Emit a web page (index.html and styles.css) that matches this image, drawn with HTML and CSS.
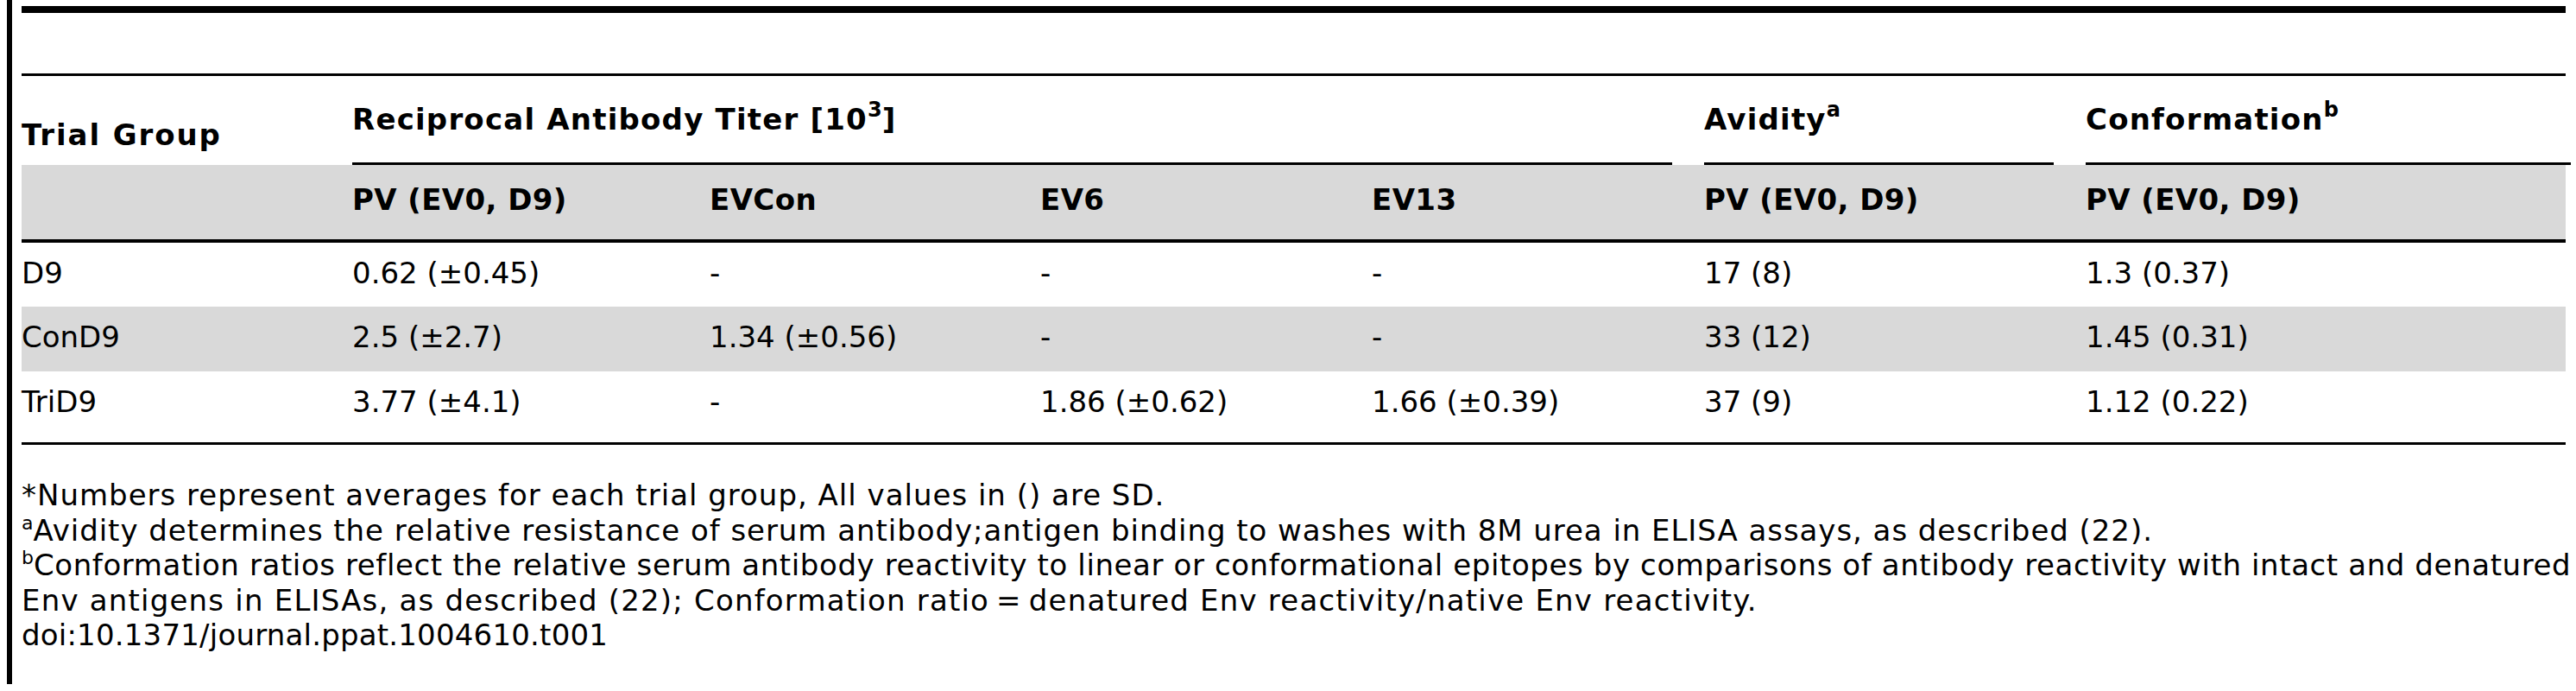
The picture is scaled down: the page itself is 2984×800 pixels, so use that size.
FILE: index.html
```html
<!DOCTYPE html>
<html lang="en">
<head>
<meta charset="utf-8">
<title>Table 1</title>
<link rel="stylesheet" href="styles.css">
</head>
<body>
<div class="page">
  <div class="caption-space"></div>
  <div class="head-top">
    <div class="th th-trial">Trial Group</div>
    <div class="th th-group th-titer">Reciprocal Antibody Titer [10<sup class="hsup">3</sup>]</div>
    <div class="th th-group th-avid">Avidity<sup class="hsup">a</sup></div>
    <div class="th th-group th-conf">Conformation<sup class="hsup">b</sup></div>
  </div>
  <div class="head-sub">
    <div class="th"></div>
    <div class="th">PV (EV0, D9)</div>
    <div class="th">EVCon</div>
    <div class="th">EV6</div>
    <div class="th">EV13</div>
    <div class="th">PV (EV0, D9)</div>
    <div class="th">PV (EV0, D9)</div>
  </div>
  <div class="tbody">
    <div class="row r1">
      <div class="td">D9</div>
      <div class="td">0.62 (±0.45)</div>
      <div class="td">-</div>
      <div class="td">-</div>
      <div class="td">-</div>
      <div class="td">17 (8)</div>
      <div class="td">1.3 (0.37)</div>
    </div>
    <div class="row r2 alt">
      <div class="td">ConD9</div>
      <div class="td">2.5 (±2.7)</div>
      <div class="td">1.34 (±0.56)</div>
      <div class="td">-</div>
      <div class="td">-</div>
      <div class="td">33 (12)</div>
      <div class="td">1.45 (0.31)</div>
    </div>
    <div class="row r3">
      <div class="td">TriD9</div>
      <div class="td">3.77 (±4.1)</div>
      <div class="td">-</div>
      <div class="td">1.86 (±0.62)</div>
      <div class="td">1.66 (±0.39)</div>
      <div class="td">37 (9)</div>
      <div class="td">1.12 (0.22)</div>
    </div>
  </div>
  <div class="notes">
    <div class="note note-star">*Numbers represent averages for each trial group, All values in () are SD.</div>
    <div class="note note-a"><sup class="nsup">a</sup>Avidity determines the relative resistance of serum antibody;antigen binding to washes with 8M urea in ELISA assays, as described (22).</div>
    <div class="note note-b"><sup class="nsup">b</sup>Conformation ratios reflect the relative serum antibody reactivity to linear or conformational epitopes by comparisons of antibody reactivity with intact and denatured</div>
    <div class="note note-env">Env antigens in ELISAs, as described (22); Conformation ratio&#8201;=&#8201;denatured Env reactivity/native Env reactivity.</div>
    <div class="note note-doi">doi:10.1371/journal.ppat.1004610.t001</div>
  </div>
</div>
</body>
</html>
```

FILE: styles.css
```css
* {
  box-sizing: border-box;
}

html, body {
  margin: 0;
  padding: 0;
  background: #ffffff;
  overflow: hidden;
}

body {
  font-family: "DejaVu Sans", "Open Sans", sans-serif;
  font-size: 34px;
  color: #000000;
  --cols: 383px 414px 383px 384px 385px 442px 562px;
}

.page {
  margin-left: 8px;
  width: 2970px;
  height: 792px;
  border-left: 6px solid #000000;
  padding-left: 11px;
  padding-right: 6px;
  padding-top: 7px;
}

.caption-space {
  height: 78px;
  border-top: 8px solid #000000;
}

.head-top {
  display: grid;
  grid-template-columns: var(--cols);
  grid-template-rows: 103px;
  border-top: 3px solid #000000;
}

.th {
  font-weight: 700;
  line-height: 48px;
  letter-spacing: 0.4px;
  white-space: nowrap;
}

.th-trial {
  grid-column: 1;
  padding-top: 44px;
  letter-spacing: 1.9px;
}

.th-group {
  padding-top: 26px;
  border-bottom: 3px solid #000000;
  margin-right: 37px;
  letter-spacing: 1.2px;
}

.th-titer {
  grid-column: 2 / 6;
}

.th-avid {
  grid-column: 6;
}

.th-conf {
  grid-column: 7;
  margin-right: 0;
}

.hsup {
  font-size: 24px;
  line-height: 0;
  vertical-align: 15px;
  letter-spacing: 0;
}

.head-sub {
  display: grid;
  grid-template-columns: var(--cols);
  height: 90px;
  background: #d9d9d9;
  border-bottom: 4px solid #000000;
}

.head-sub .th {
  padding-top: 16px;
}

.tbody {
  border-bottom: 3px solid #000000;
}

.row {
  display: grid;
  grid-template-columns: var(--cols);
}

.row.alt {
  background: #d9d9d9;
}

.r1 {
  height: 74px;
}

.r2 {
  height: 75px;
}

.r3 {
  height: 82px;
}

.td {
  padding-top: 11px;
  line-height: 48px;
  white-space: nowrap;
}

.notes {
  margin-top: 38px;
  line-height: 40.5px;
  white-space: nowrap;
}

.note-star {
  letter-spacing: 1px;
}

.note-a {
  letter-spacing: 0.95px;
}

.note-b {
  letter-spacing: 0.6px;
}

.note-env {
  letter-spacing: 1.2px;
}

.note-doi {
  letter-spacing: 0.2px;
}

.nsup {
  font-size: 22px;
  line-height: 0;
  vertical-align: 13px;
  letter-spacing: 0;
}
```
